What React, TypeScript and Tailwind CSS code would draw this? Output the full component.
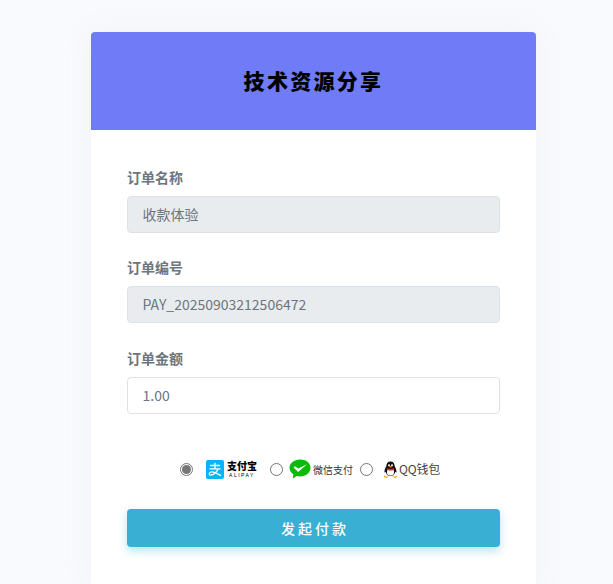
const font = "font-['Noto_Sans_CJK_SC','Noto_Sans',sans-serif]";

function Field({ label, value, disabled, className }: { label: string; value: string; disabled?: boolean; className: string }) {
  return (
    <div className={className}>
      <label className="block h-[26px] text-[14px] leading-[26px] font-bold text-[#6c757d]">{label}</label>
      <div
        className={`mt-[6px] flex h-[37px] items-center rounded border border-[#dee2e6] px-[14.5px] text-[14px] text-[#6c757d] ${
          disabled ? 'bg-[#e9ecef]' : 'bg-white'
        }`}
      >
        {value}
      </div>
    </div>
  );
}

function Radio({ checked }: { checked?: boolean }) {
  return (
    <span className="flex h-[13px] w-[13px] shrink-0 items-center justify-center rounded-full border border-[#767676] bg-white">
      {checked && <span className="h-[9px] w-[9px] rounded-full bg-[#767676]" />}
    </span>
  );
}

function AlipayLogo() {
  return (
    <svg width="18" height="19" viewBox="0 0 18 19" className="shrink-0">
      <rect width="18" height="19" rx="2" fill="#06b4fd" />
      <path d="M4 5.500h10M9 2.800v5.700M3.500 8.800h11M12 9c-1.500 3.500-4 5.500-7 6-1.500.2-2-.8-1.500-1.800.6-1.200 3-1.500 5.500-.5l6 3" fill="none" stroke="#fff" strokeWidth="1.300" />
    </svg>
  );
}

function WechatLogo() {
  return (
    <svg width="22" height="20" viewBox="0 0 22 20" className="shrink-0">
      <path d="M11 0.500C5 0.500 0.500 4.200 0.500 8.800c0 2.700 1.500 5 3.800 6.500L3.800 19.500l4-2.400c1 .3 2.100.4 3.200.4 6 0 10.500-3.900 10.500-8.700S17 0.500 11 0.500z" fill="#09bb07" />
      <path d="M4.500 8.500l1.500-1.200 3.200 2.300L18 5.300 9.200 13z" fill="#fff" />
    </svg>
  );
}

function QQLogo() {
  return (
    <svg width="15" height="17" viewBox="0 0 15 17" className="shrink-0">
      <path d="M1.300 14.500c-.8.6-.6 2 1 2.200 1.400.1 3-.3 3.200-1.200H3z" fill="#f7a90c" />
      <path d="M13.700 14.500c.8.6.6 2-1 2.200-1.400.1-3-.3-3.200-1.200H12z" fill="#f7a90c" />
      <path d="M7.500 0.500C4.800 0.500 3.400 2.600 3.300 5.200 2.200 7 1.300 9.200 1.500 11c.1.9.7.6 1.200-.3.300 1.500 1.100 2.900 2.300 3.700h5c1.200-.8 2-2.200 2.300-3.700.5.9 1.100 1.200 1.200.3.2-1.800-.7-4-1.800-5.800C11.600 2.600 10.200.5 7.500.5z" fill="#111" />
      <path d="M4.500 8.500c-.6 1.600-.7 3.600 0 5 .6.8 5.400.8 6 0 .7-1.400.6-3.400 0-5-2 .7-4 .7-6 0z" fill="#fff" />
      <circle cx="6" cy="4.300" r="1" fill="#fff" />
      <circle cx="9" cy="4.300" r="1" fill="#fff" />
      <path d="M3.800 7c2 1.400 5.400 1.400 7.400 0l-.5 2c-2 .7-4.400.7-6.400 0z" fill="#e8302a" />
      <path d="M5.500 5.800c1.300-.6 2.700-.6 4 0-1.300.9-2.700.9-4 0z" fill="#f7a90c" />
    </svg>
  );
}

export default function App() {
  return (
    <div className={`min-h-[584px] bg-[#f9fafe] pt-8 ${font}`}>
      <div className="ml-[91px] w-[445px] overflow-hidden rounded-t bg-white shadow-[0_0_30px_rgba(140,152,164,0.08)]">
        <div className="flex h-[98px] items-center justify-center bg-[#6f7bf7] pb-[2px]">
          <h1 className="text-[21px] leading-none font-black tracking-[2.300px] text-black">技术资源分享</h1>
        </div>

        <div className="h-[454px] px-9 pt-[34px]">
          <Field className="mb-[21px]" label="订单名称" value="收款体验" disabled />
          <Field className="mb-[22px]" label="订单编号" value="PAY_20250903212506472" disabled />
          <Field className="mb-[21px]" label="订单金额" value="1.00" />

          <div className="mt-[43px] flex h-6 items-center pl-[53px]">
            <Radio checked />
            <span className="ml-[13px]"><AlipayLogo /></span>
            <span className="ml-[3px] flex w-[30px] flex-col items-center text-black">
              <span className="h-[11px] text-[10px] leading-[11px] font-black whitespace-nowrap">支付宝</span>
              <span className="mt-[2px] h-[5px] font-['Liberation_Sans',sans-serif] text-[5px] leading-[5px] tracking-[1.500px] whitespace-nowrap">ALIPAY</span>
            </span>
            <span className="ml-[13px]"><Radio /></span>
            <span className="ml-[6px]"><WechatLogo /></span>
            <span className="ml-[2px] text-[10px] whitespace-nowrap text-[#333]">微信支付</span>
            <span className="ml-[7px]"><Radio /></span>
            <span className="ml-[10px]"><QQLogo /></span>
            <span className="ml-px text-[12px] tracking-[-0.200px] whitespace-nowrap text-[#444]">QQ钱包</span>
          </div>

          <button className="mt-[28px] h-[38px] w-full rounded bg-[#38afd3] pl-[3px] text-[14px] font-medium tracking-[3px] text-white shadow-[0_4px_10px_rgba(56,175,211,0.35)]">
            发起付款
          </button>
        </div>
      </div>
    </div>
  );
}
